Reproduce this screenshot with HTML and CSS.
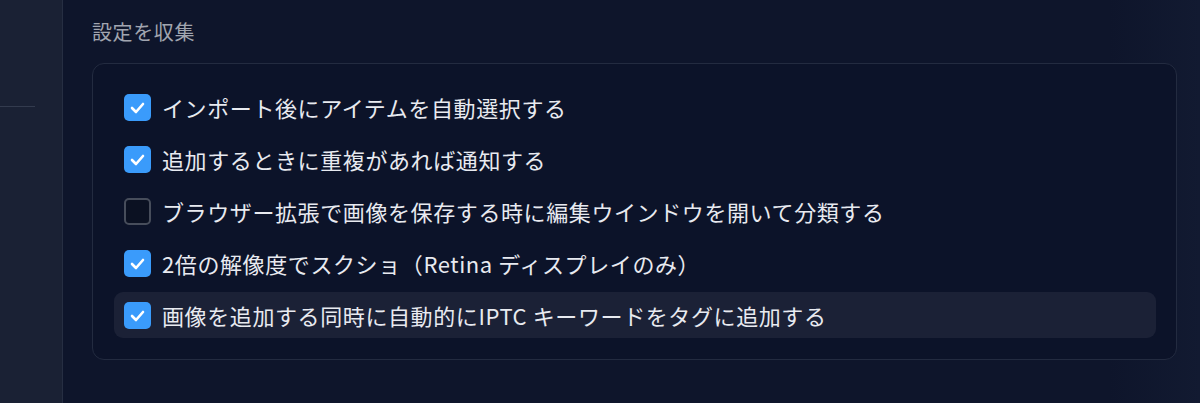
FILE: index.html
```html
<!DOCTYPE html>
<html lang="ja">
  <head>
    <meta charset="UTF-8" />
    <meta name="viewport" content="width=device-width, initial-scale=1.0" />
    <title>設定を収集</title>
    <link rel="stylesheet" href="styles.css">
  </head>
  <body>
    <div class="layout">
      <aside class="sidebar">
        <div class="sidebar-rule"></div>
      </aside>
      <main class="main">
        <h2 class="section-title">設定を収集</h2>
        <div class="card">
          <label class="option">
            <span class="box checked">
              <svg viewBox="0 0 27 27"><path d="M8 14 L12 18 L19 10" /></svg>
            </span>
            <span class="label">インポート後にアイテムを自動選択する</span>
          </label>
          <label class="option">
            <span class="box checked">
              <svg viewBox="0 0 27 27"><path d="M8 14 L12 18 L19 10" /></svg>
            </span>
            <span class="label">追加するときに重複があれば通知する</span>
          </label>
          <label class="option">
            <span class="box"></span>
            <span class="label">ブラウザー拡張で画像を保存する時に編集ウインドウを開いて分類する</span>
          </label>
          <label class="option">
            <span class="box checked">
              <svg viewBox="0 0 27 27"><path d="M8 14 L12 18 L19 10" /></svg>
            </span>
            <span class="label">2倍の解像度でスクショ（Retina ディスプレイのみ）</span>
          </label>
          <label class="option hover">
            <span class="box checked">
              <svg viewBox="0 0 27 27"><path d="M8 14 L12 18 L19 10" /></svg>
            </span>
            <span class="label">画像を追加する同時に自動的にIPTC キーワードをタグに追加する</span>
          </label>
        </div>
      </main>
    </div>
  </body>
</html>
```

FILE: styles.css
```css
body {
  margin: 0;
  font-family: "Noto Sans CJK JP", "Noto Sans", sans-serif;
  background-color: #0e152b;
  color: #e8eaf0;
}
.layout {
  display: flex;
  height: 403px;
  overflow: hidden;
}
.sidebar {
  width: 63px;
  flex-shrink: 0;
  background-color: #1a2134;
  border-right: 1px solid #262e42;
  padding-top: 106px;
  box-sizing: border-box;
}
.sidebar-rule {
  width: 35px;
  height: 1px;
  background-color: #333b4e;
}
.main {
  flex: 1;
  padding: 0 23px 0 29px;
  background: linear-gradient(to right, #0e152b 92%, #121a31 100%);
}
.section-title {
  margin: 19px 0 0;
  font-size: 20px;
  font-weight: normal;
  letter-spacing: 0.6px;
  line-height: 26px;
  color: #a1a5b0;
}
.card {
  margin-top: 18px;
  border: 1px solid #232b40;
  border-radius: 12px;
  background-color: #0c1329;
  padding: 20px 20px 21px 21px;
  display: flex;
  flex-direction: column;
  gap: 6px;
}
.option {
  display: flex;
  align-items: center;
  gap: 11px;
  height: 46px;
  padding: 0 10px;
  border-radius: 9px;
}
.option.hover {
  background-color: #1b2136;
}
.box {
  width: 27px;
  height: 27px;
  flex-shrink: 0;
  box-sizing: border-box;
  border-radius: 5px;
  border: 2px solid #474d5b;
  background-color: #0b1122;
}
.box.checked {
  border: none;
  background-color: #3a9bfb;
}
.box svg {
  display: block;
  width: 27px;
  height: 27px;
}
.box path {
  fill: none;
  stroke: #fff;
  stroke-width: 2.6;
  stroke-linecap: round;
  stroke-linejoin: round;
}
.label {
  font-size: 22px;
  letter-spacing: 0.6px;
  line-height: 28px;
  white-space: nowrap;
}
```
